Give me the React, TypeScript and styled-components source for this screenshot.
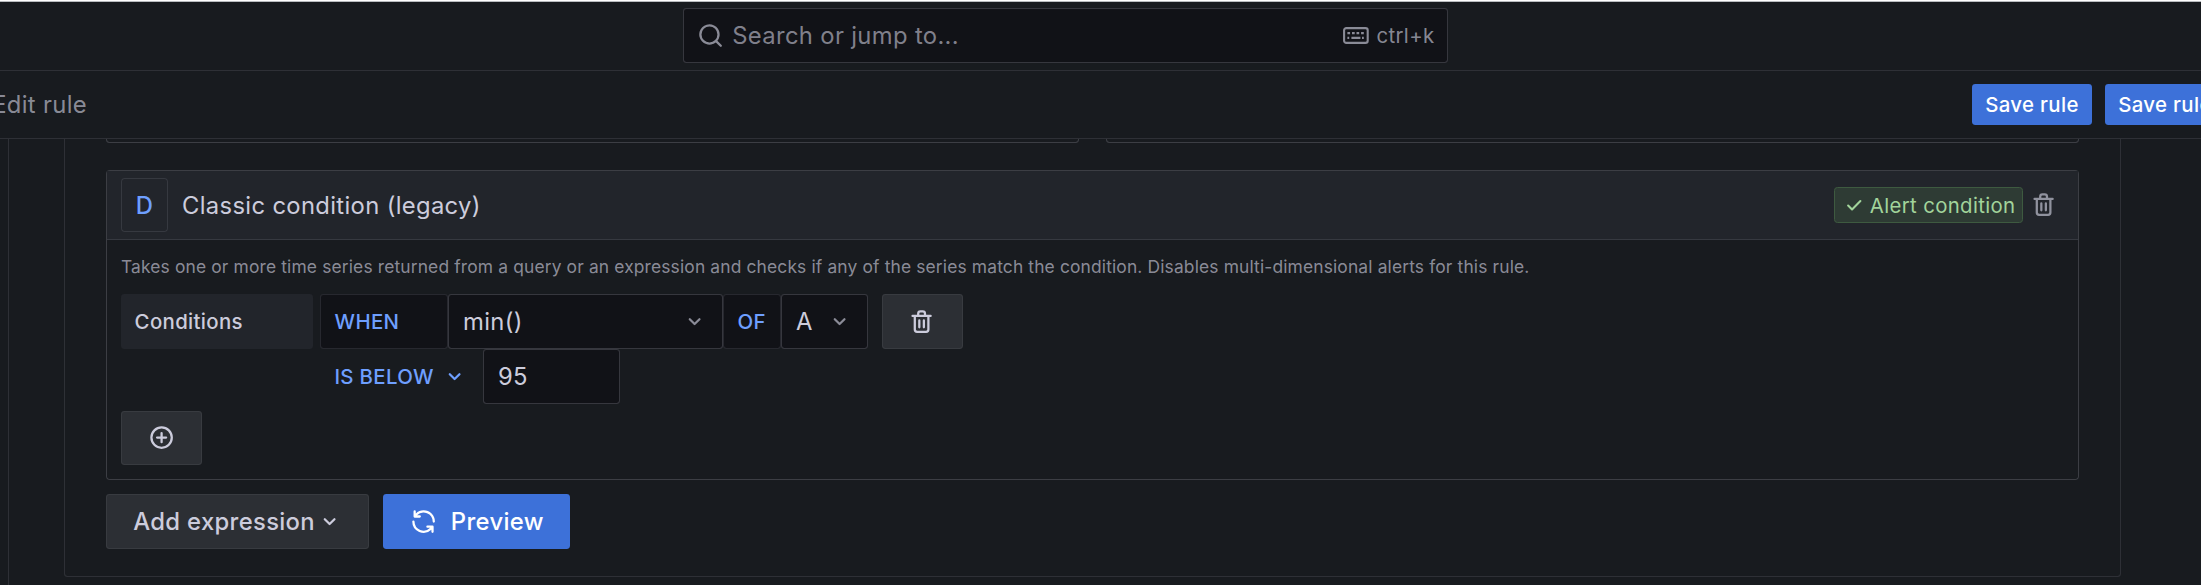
import React from "react";
import styled, { createGlobalStyle } from "styled-components";

const colors = {
  background: "#181b1f",
  canvas: "#111217",
  secondary: "#22252b",
  borderWeak: "rgba(204, 204, 220, 0.12)",
  borderMedium: "rgba(204, 204, 220, 0.2)",
  text: "rgb(204, 204, 220)",
  textMuted: "rgba(204, 204, 220, 0.65)",
  link: "#6e9fff",
  primary: "#3d71d9",
};

const GlobalStyle = createGlobalStyle`
  *, *::before, *::after { box-sizing: border-box; }
  body {
    margin: 0;
    background: ${colors.background};
    color: ${colors.text};
    font-family: Inter, "Liberation Sans", sans-serif;
    font-size: 23.8px;
    letter-spacing: 0.34px;
    line-height: 1.5;
    overflow: hidden;
  }
`;

const paths = {
  search:
    "M21.71,20.29,18,16.61A9,9,0,1,0,16.61,18l3.68,3.68a1,1,0,0,0,1.42,0A1,1,0,0,0,21.71,20.29ZM11,18a7,7,0,1,1,7-7A7,7,0,0,1,11,18Z",
  trash:
    "M10,18a1,1,0,0,0,1-1V11a1,1,0,0,0-2,0v6A1,1,0,0,0,10,18ZM20,6H16V5a3,3,0,0,0-3-3H11A3,3,0,0,0,8,5V6H4A1,1,0,0,0,4,8H5V19a3,3,0,0,0,3,3h8a3,3,0,0,0,3-3V8h1a1,1,0,0,0,0-2ZM10,5a1,1,0,0,1,1-1h2a1,1,0,0,1,1,1V6H10Zm7,14a1,1,0,0,1-1,1H8a1,1,0,0,1-1-1V8H17Zm-3-1a1,1,0,0,0,1-1V11a1,1,0,0,0-2,0v6A1,1,0,0,0,14,18Z",
  angleDown:
    "M17,9.17a1,1,0,0,0-1.41,0L12,12.71,8.46,9.17a1,1,0,0,0-1.41,0,1,1,0,0,0,0,1.42l4.24,4.24a1,1,0,0,0,1.42,0L17,10.59A1,1,0,0,0,17,9.17Z",
  plusCircle:
    "M12,2A10,10,0,1,0,22,12,10,10,0,0,0,12,2Zm0,18a8,8,0,1,1,8-8A8,8,0,0,1,12,20Zm4-9H13V8a1,1,0,0,0-2,0v3H8a1,1,0,0,0,0,2h3v3a1,1,0,0,0,2,0V13h3a1,1,0,0,0,0-2Z",
  sync:
    "M19.91,15.51H15.38a1,1,0,0,0,0,2h2.4A8,8,0,0,1,4,12a1,1,0,0,0-2,0,10,10,0,0,0,16.88,7.23V21a1,1,0,0,0,2,0V16.5A1,1,0,0,0,19.91,15.51ZM12,2A10,10,0,0,0,5.12,4.77V3a1,1,0,0,0-2,0V7.5a1,1,0,0,0,1,1h4.5a1,1,0,0,0,0-2H6.22A8,8,0,0,1,20,12a1,1,0,0,0,2,0A10,10,0,0,0,12,2Z",
  check:
    "M18.71,7.21a1,1,0,0,0-1.42,0L9.84,14.67,6.71,11.53A1,1,0,1,0,5.29,13l3.84,3.84a1,1,0,0,0,1.42,0l8.16-8.16A1,1,0,0,0,18.71,7.21Z",
};

const Svg = styled.svg`
  display: block;
  flex: none;
  fill: currentColor;
`;

function Icon({ name, size = 27.2 }: { name: keyof typeof paths; size?: number }) {
  return (
    <Svg width={size} height={size} viewBox="0 0 24 24">
      <path d={paths[name]} />
    </Svg>
  );
}

function KeyboardIcon() {
  return (
    <Svg width="26" height="17" viewBox="0 0 26 17">
      <rect x="1.1" y="1.1" width="23.6" height="14.8" rx="2.2" fill="none" stroke="currentColor" strokeWidth="2.1" />
      <path d="M4.4 5h2.7v2.3H4.4zM9 5h2.7v2.3H9zM13.5 5h2.7v2.3h-2.7zM18.1 5h2.7v2.3h-2.7zM4.4 9.7h1.8V12H4.4zM8.4 9.7h9V12h-9zM19 9.7h1.8V12H19z" />
    </Svg>
  );
}

const Page = styled.div`
  display: flex;
  flex-direction: column;
  width: 2201px;
  height: 585px;
  overflow: hidden;
  white-space: nowrap;
  border-top: 1px solid #ffffff;
`;

const TopBar = styled.header`
  display: flex;
  justify-content: center;
  height: 70px;
  padding: 6px 70px 0 0;
  border-top: 1px solid #b9bcbf;
  border-bottom: 1px solid ${colors.borderWeak};
`;

const SearchBox = styled.div`
  display: flex;
  align-items: center;
  width: 765px;
  height: 55px;
  padding: 0 12.5px 0 12.7px;
  border: 1px solid ${colors.borderMedium};
  border-radius: 3.4px;
  background: ${colors.canvas};
  color: ${colors.textMuted};
`;

const SearchText = styled.span`
  flex: 1;
  padding-left: 8.4px;
  color: rgba(204, 204, 220, 0.6);
`;

const Shortcut = styled.span`
  padding: 1px 0 0 8px;
  font-size: 20.4px;
`;

const Toolbar = styled.div`
  display: flex;
  align-items: center;
  justify-content: space-between;
  height: 68px;
  border-bottom: 1px solid ${colors.borderWeak};
`;

const Breadcrumb = styled.div`
  display: flex;
  justify-content: flex-end;
  width: 87px;
  color: ${colors.textMuted};
`;

const ToolbarActions = styled.div`
  display: flex;
  gap: 13px;
  width: 229px;
`;

const Button = styled.button<{ $primary?: boolean }>`
  display: flex;
  flex: none;
  align-items: center;
  justify-content: center;
  height: 55px;
  padding: 0;
  font: inherit;
  font-weight: 500;
  letter-spacing: inherit;
  color: ${(p) => (p.$primary ? "#ffffff" : colors.text)};
  background: ${(p) => (p.$primary ? colors.primary : "#2c2f34")};
  border: 1px solid ${(p) => (p.$primary ? "transparent" : "rgba(204, 204, 220, 0.08)")};
  border-radius: 3.4px;
`;

const SaveButton = styled(Button)`
  width: 120px;
  height: 41px;
  padding-top: 1px;
  font-size: 20.4px;
`;

const IconButton = styled(Button)`
  width: 81px;
`;

const AddConditionButton = styled(IconButton)`
  height: 54px;
`;

const AddExpressionButton = styled(Button)`
  width: 263px;
  padding-left: 1px;
  gap: 0.5px;
`;

const PreviewButton = styled(Button)`
  width: 187px;
  padding-left: 1px;
  gap: 13.4px;
`;

const Main = styled.main`
  flex: 1;
  min-height: 0;
  margin-left: 8px;
  padding-left: 55px;
  border-left: 1px solid ${colors.borderWeak};
`;

const Section = styled.section`
  width: 2057px;
  height: 438px;
  padding: 0 41px;
  border: 1px solid ${colors.borderWeak};
  border-top: none;
  border-radius: 0 0 3.4px 3.4px;
`;

const PreviousCards = styled.div`
  display: flex;
  gap: 27px;
  height: 4px;
  overflow: hidden;
`;

const PreviousCard = styled.div`
  flex: 1;
  border: 1px solid ${colors.borderMedium};
  border-top: none;
  border-radius: 0 0 3.4px 3.4px;
`;

const Card = styled.article`
  height: 310px;
  margin-top: 27px;
  border: 1px solid ${colors.borderMedium};
  border-radius: 3.4px;
`;

const CardHeader = styled.div`
  display: flex;
  align-items: center;
  height: 69px;
  padding: 0 20.6px 0 14px;
  background: ${colors.secondary};
  border-bottom: 1px solid ${colors.borderWeak};
`;

const RefId = styled.div`
  display: flex;
  align-items: center;
  justify-content: center;
  width: 47px;
  height: 54px;
  padding-top: 1px;
  border: 1px solid ${colors.borderWeak};
  border-radius: 3.4px;
  color: ${colors.link};
  font-weight: 500;
`;

const CardTitle = styled.div`
  flex: 1;
  padding: 1.5px 0 0 14px;
`;

const Badge = styled.div`
  display: flex;
  align-items: center;
  width: 189px;
  height: 36px;
  margin-right: 7.4px;
  padding-left: 6.8px;
  gap: 3.7px;
  font-size: 20.4px;
  color: #a2d49b;
  background: #2e3b34;
  border: 1px solid #3e5a40;
  border-radius: 3.4px;
`;

const BadgeText = styled.span`
  padding-top: 2px;
`;

const Muted = styled.span`
  display: flex;
  color: ${colors.textMuted};
`;

const CardBody = styled.div`
  padding: 13px 14px 0;
`;

const Description = styled.p`
  height: 41px;
  margin: 0;
  font-size: 17.4px;
  letter-spacing: 0.147px;
  line-height: 28px;
  color: ${colors.textMuted};
`;

const Row = styled.div`
  display: flex;
  height: 55px;
`;

const Label = styled.div`
  display: flex;
  align-items: center;
  width: 192px;
  margin-right: 7px;
  padding: 1px 0 0 13.6px;
  font-size: 20.4px;
  font-weight: 500;
  background: ${colors.secondary};
  border-radius: 3.4px;
`;

const Keyword = styled.div<{ $width: number }>`
  display: flex;
  align-items: center;
  width: ${(p) => p.$width}px;
  padding: 1px 0 0 13.6px;
  font-size: 20.4px;
  font-weight: 500;
  color: ${colors.link};
  background: ${colors.canvas};
  border: 1px solid ${colors.borderWeak};
  border-radius: 3.4px;
`;

const Field = styled.div<{ $width: number }>`
  display: flex;
  align-items: center;
  justify-content: space-between;
  width: ${(p) => p.$width}px;
  padding: 0 13.6px 0 14px;
  background: ${colors.canvas};
  border: 1px solid ${colors.borderMedium};
  border-radius: 3.4px;
`;

const RowDelete = styled(IconButton)`
  margin-left: 14px;
  padding-right: 1.5px;
`;

const EvaluatorRow = styled(Row)`
  padding-left: 213.4px;
  margin-bottom: 7px;
`;

const Evaluator = styled.div`
  display: flex;
  align-items: center;
  gap: 7.5px;
  width: 148.6px;
  padding-top: 1px;
  font-size: 20.4px;
  font-weight: 500;
  color: ${colors.link};
`;

const Actions = styled.div`
  display: flex;
  gap: 14px;
  margin-top: 14px;
`;

export default function App() {
  return (
    <>
      <GlobalStyle />
      <Page>
        <TopBar>
          <SearchBox>
            <Icon name="search" />
            <SearchText>Search or jump to...</SearchText>
            <KeyboardIcon />
            <Shortcut>ctrl+k</Shortcut>
          </SearchBox>
        </TopBar>
        <Toolbar>
          <Breadcrumb>Edit rule</Breadcrumb>
          <ToolbarActions>
            <SaveButton $primary>Save rule</SaveButton>
            <SaveButton $primary>Save rule</SaveButton>
          </ToolbarActions>
        </Toolbar>
        <Main>
          <Section>
            <PreviousCards>
              <PreviousCard />
              <PreviousCard />
            </PreviousCards>
            <Card>
              <CardHeader>
                <RefId>D</RefId>
                <CardTitle>Classic condition (legacy)</CardTitle>
                <Badge>
                  <Icon name="check" size={24.5} />
                  <BadgeText>Alert condition</BadgeText>
                </Badge>
                <Muted>
                  <Icon name="trash" />
                </Muted>
              </CardHeader>
              <CardBody>
                <Description>
                  Takes one or more time series returned from a query or an expression and checks if any of the series
                  match the condition. Disables multi-dimensional alerts for this rule.
                </Description>
                <Row>
                  <Label>Conditions</Label>
                  <Keyword $width={128}>WHEN</Keyword>
                  <Field $width={275}>
                    min()
                    <Muted>
                      <Icon name="angleDown" />
                    </Muted>
                  </Field>
                  <Keyword $width={58}>OF</Keyword>
                  <Field $width={87}>
                    A
                    <Muted>
                      <Icon name="angleDown" />
                    </Muted>
                  </Field>
                  <RowDelete>
                    <Icon name="trash" />
                  </RowDelete>
                </Row>
                <EvaluatorRow>
                  <Evaluator>
                    IS BELOW
                    <Icon name="angleDown" />
                  </Evaluator>
                  <Field $width={137}>95</Field>
                </EvaluatorRow>
                <AddConditionButton>
                  <Icon name="plusCircle" />
                </AddConditionButton>
              </CardBody>
            </Card>
            <Actions>
              <AddExpressionButton>
                Add expression
                <Icon name="angleDown" />
              </AddExpressionButton>
              <PreviewButton $primary>
                <Icon name="sync" />
                Preview
              </PreviewButton>
            </Actions>
          </Section>
        </Main>
      </Page>
    </>
  );
}
